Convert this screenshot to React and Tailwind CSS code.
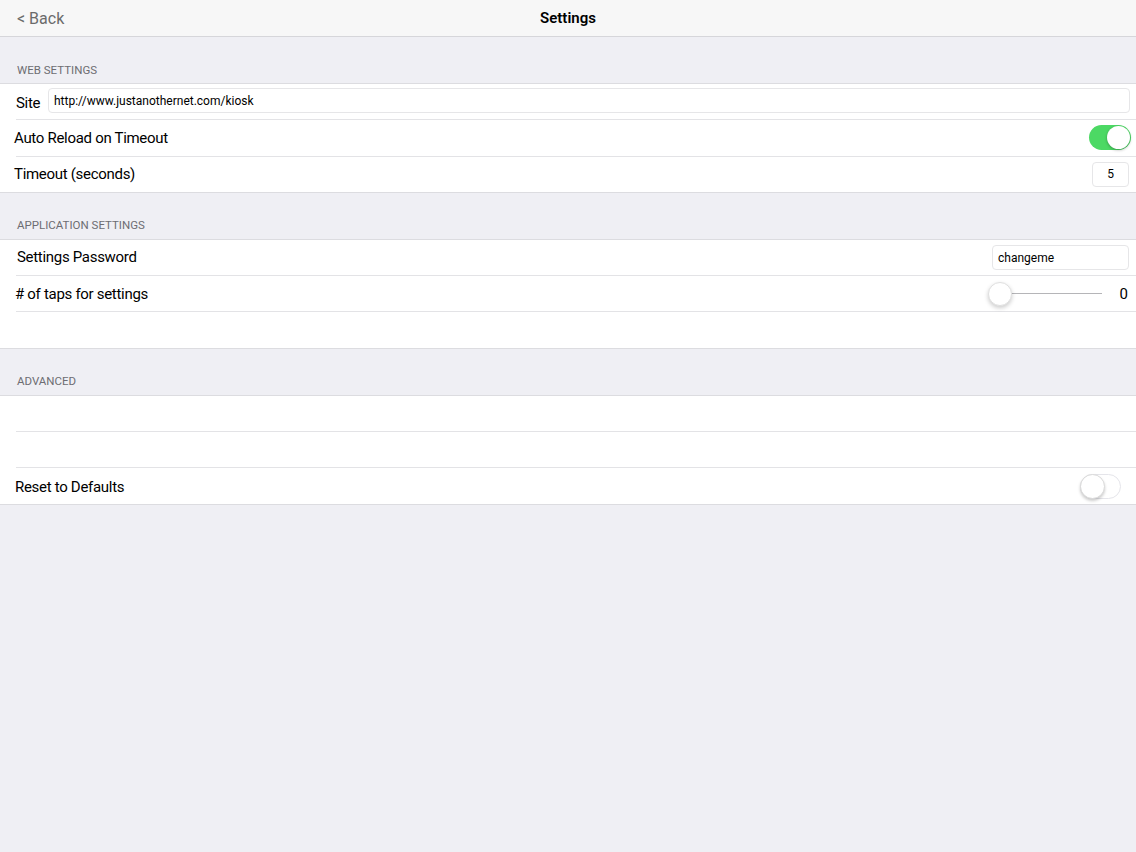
import React from "react";

function SectionHeader({ title }) {
  return (
    <div className="h-[46px] flex items-end pb-[7px] pl-[17px]">
      <span className="text-[11.5px] text-[#6d6d72] leading-none">{title}</span>
    </div>
  );
}

function Row({ children, last, className = "" }) {
  return (
    <div>
      <div className={`h-[35.3px] flex items-center ${className}`}>{children}</div>
      {!last && <div className="ml-[16px] h-px bg-[#e3e3e6]" />}
    </div>
  );
}

function Group({ children }) {
  return <div className="bg-white border-y border-[#dcdce0]">{children}</div>;
}

function Toggle({ on }) {
  if (on) {
    return (
      <div className="w-[42px] h-[25px] rounded-full bg-[#4cd964] relative">
        <div className="absolute right-[1px] top-[1px] w-[23px] h-[23px] rounded-full bg-white shadow-[0_1px_3px_rgba(0,0,0,0.3)]" />
      </div>
    );
  }
  return (
    <div className="w-[41px] h-[25px] rounded-full bg-white border border-[#e5e5ea] relative">
      <div className="absolute left-[-1px] top-[-1px] w-[25px] h-[25px] rounded-full bg-white border border-[#dadada] shadow-[0_2px_3px_rgba(0,0,0,0.2)]" />
    </div>
  );
}

const label = "text-[15px] tracking-[-0.3px]";

export default function App() {
  return (
    <div
      className="w-[1136px] h-[852px] bg-[#efeff4] text-black"
      style={{ fontFamily: "Roboto, 'Liberation Sans', sans-serif" }}
    >
      <div className="h-[37px] bg-[#f7f7f7] border-b border-[#d6d6da] relative flex items-center">
        <span className="pl-[17px] text-[16px] text-[#6b6b6b] mt-[1px]">&lt; Back</span>
        <span className="absolute left-0 right-0 text-center text-[15px] font-semibold">Settings</span>
      </div>

      <SectionHeader title="WEB SETTINGS" />
      <Group>
        <Row className="pl-[16px] pr-[6px]">
          <span className={`${label} w-[32px] mt-[3px]`}>Site</span>
          <div className="flex-1 h-[25px] mt-[-2px] border border-[#e6e6e8] rounded-[4px] flex items-center pl-[5px] text-[12px]">
            http://www.justanothernet.com/kiosk
          </div>
        </Row>
        <Row className="pl-[14px] pr-[5px] justify-between">
          <span className={label}>Auto Reload on Timeout</span>
          <Toggle on />
        </Row>
        <Row last className="pl-[14px] pr-[7px] justify-between">
          <span className={`${label} mt-[1px]`}>Timeout (seconds)</span>
          <div className="w-[37px] h-[25px] border border-[#e6e6e8] rounded-[4px] flex items-center justify-center text-[12px]">5</div>
        </Row>
      </Group>

      <SectionHeader title="APPLICATION SETTINGS" />
      <Group>
        <Row className="pl-[17px] pr-[7px] justify-between">
          <span className={label}>Settings Password</span>
          <div className="w-[137px] h-[25px] border border-[#e6e6e8] rounded-[4px] flex items-center pl-[5px] text-[12px]">changeme</div>
        </Row>
        <Row className="pl-[15px] pr-[8px] justify-between">
          <span className={label}># of taps for settings</span>
          <div className="flex items-center">
            <div className="relative w-[114px] h-[26px] flex items-center">
              <div className="absolute left-[12px] right-0 h-px bg-[#b5b5b8]" />
              <div className="absolute left-0 top-[1px] w-[24px] h-[24px] rounded-full bg-white border border-[#e0e0e0] shadow-[0_2px_4px_rgba(0,0,0,0.2)]" />
            </div>
            <span className="w-[26px] text-right text-[15px]">0</span>
          </div>
        </Row>
        <Row last />
      </Group>

      <SectionHeader title="ADVANCED" />
      <Group>
        <Row />
        <Row />
        <Row last className="pl-[15px] pr-[15px] justify-between">
          <span className={`${label} mt-[2px]`}>Reset to Defaults</span>
          <Toggle />
        </Row>
      </Group>
    </div>
  );
}
